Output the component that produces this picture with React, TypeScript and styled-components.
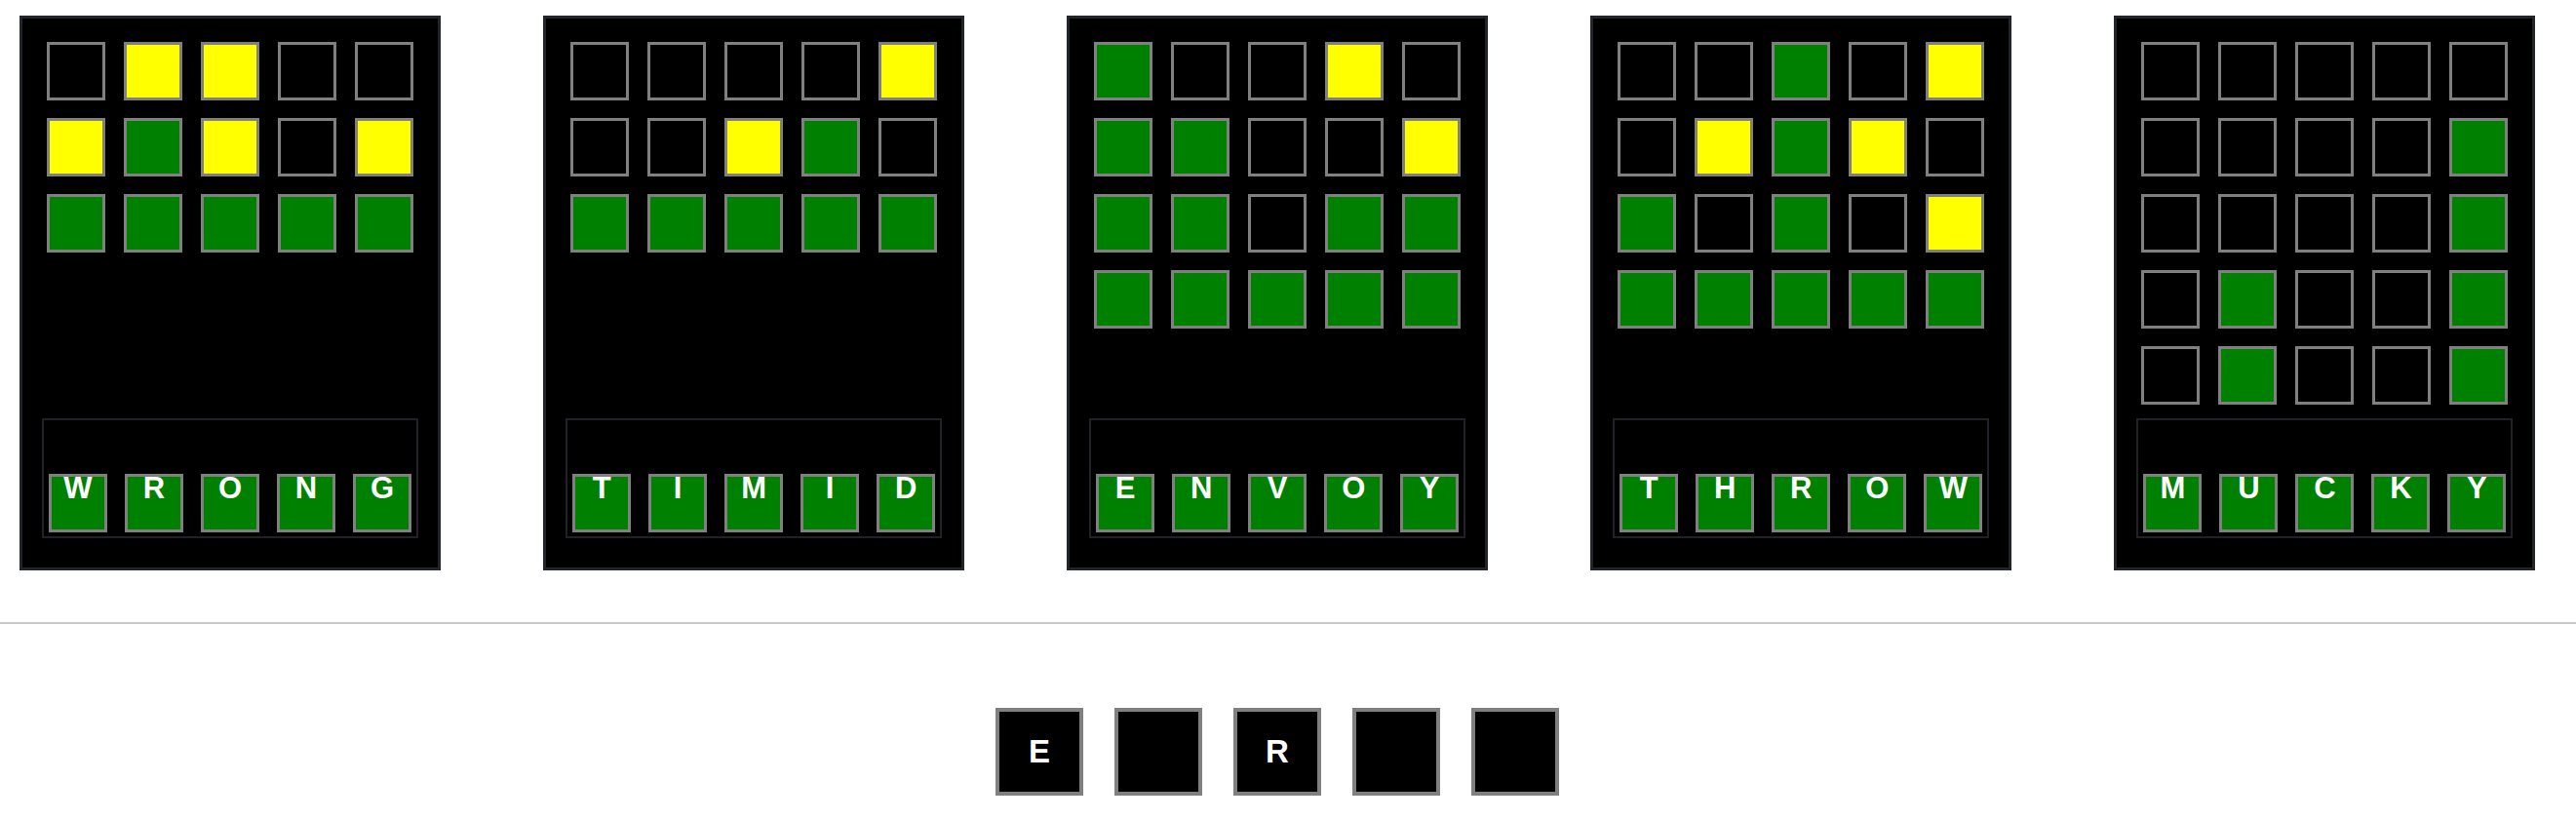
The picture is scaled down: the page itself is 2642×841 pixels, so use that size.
import React from "react";
import styled, { createGlobalStyle } from "styled-components";

type Cell = "e" | "y" | "g";

const GlobalStyle = createGlobalStyle`
  html, body {
    margin: 0;
    padding: 0;
    background: #ffffff;
    font-family: "Liberation Sans", Arial, sans-serif;
  }
`;

const Page = styled.div`
  display: flex;
  flex-direction: column;
  width: 2642px;
  height: 841px;
  overflow: hidden;
`;

const Boards = styled.div`
  display: flex;
  gap: 105.1px;
  padding: 16px 0 0 20px;
`;

const Card = styled.div`
  box-sizing: border-box;
  width: 432px;
  height: 569px;
  background: #000;
  border: 3px solid #212529;
  padding: 24px 20px 0 20px;
  display: flex;
  flex-direction: column;
`;

const Grid = styled.div`
  height: 372px;
  margin-bottom: 14px;
  display: flex;
  flex-direction: column;
  gap: 18px;
  padding-left: 5px;
`;

const Row = styled.div`
  display: flex;
  gap: 19px;
`;

const colorFor = (c: Cell) =>
  c === "y" ? "#ffff00" : c === "g" ? "#008000" : "#000000";

const Tile = styled.div<{ $c: Cell }>`
  box-sizing: border-box;
  width: 60px;
  height: 60px;
  border: 3px solid #808080;
  background: ${(p) => colorFor(p.$c)};
`;

const AnswerBox = styled.div`
  box-sizing: border-box;
  height: 123px;
  border: 2px solid #1f2226;
  padding: 0 5px 4px 5px;
  display: flex;
  align-items: flex-end;
  justify-content: space-between;
`;

const AnswerTile = styled.div`
  box-sizing: border-box;
  width: 60px;
  height: 60px;
  border: 3px solid #808080;
  background: #008000;
  color: #ffffff;
  font-family: "Liberation Sans", Arial, sans-serif;
  font-weight: bold;
  font-size: 31px;
  line-height: 23px;
  text-align: center;
`;

const Separator = styled.div`
  margin-top: 53px;
  height: 2px;
  background: #c8c8c8;
  width: 100%;
`;

const InputRow = styled.div`
  display: flex;
  justify-content: center;
  gap: 32px;
  margin-top: 86px;
  padding-right: 22px;
`;

const InputTile = styled.div`
  box-sizing: border-box;
  width: 90px;
  height: 90px;
  border: 4px solid #808080;
  background: #000;
  color: #fff;
  font-family: "Liberation Sans", Arial, sans-serif;
  font-weight: bold;
  font-size: 33px;
  display: flex;
  align-items: center;
  justify-content: center;
`;

const parse = (rows: string[]): Cell[][] =>
  rows.map((r) => r.split("") as Cell[]);

const boards: { word: string; rows: Cell[][] }[] = [
  { word: "WRONG", rows: parse(["eyyee", "ygyey", "ggggg"]) },
  { word: "TIMID", rows: parse(["eeeey", "eeyge", "ggggg"]) },
  { word: "ENVOY", rows: parse(["geeye", "ggeey", "ggegg", "ggggg"]) },
  { word: "THROW", rows: parse(["eegey", "eygye", "gegey", "ggggg"]) },
  { word: "MUCKY", rows: parse(["eeeee", "eeeeg", "eeeeg", "egeeg", "egeeg"]) },
];

const input = ["E", "", "R", "", ""];

export default function App() {
  return (
    <>
      <GlobalStyle />
      <Page>
        <Boards>
          {boards.map((b) => (
            <Card key={b.word}>
              <Grid>
                {b.rows.map((row, i) => (
                  <Row key={i}>
                    {row.map((c, j) => (
                      <Tile key={j} $c={c} />
                    ))}
                  </Row>
                ))}
              </Grid>
              <AnswerBox>
                {b.word.split("").map((l, i) => (
                  <AnswerTile key={i}>{l}</AnswerTile>
                ))}
              </AnswerBox>
            </Card>
          ))}
        </Boards>
        <Separator />
        <InputRow>
          {input.map((l, i) => (
            <InputTile key={i}>{l}</InputTile>
          ))}
        </InputRow>
      </Page>
    </>
  );
}
